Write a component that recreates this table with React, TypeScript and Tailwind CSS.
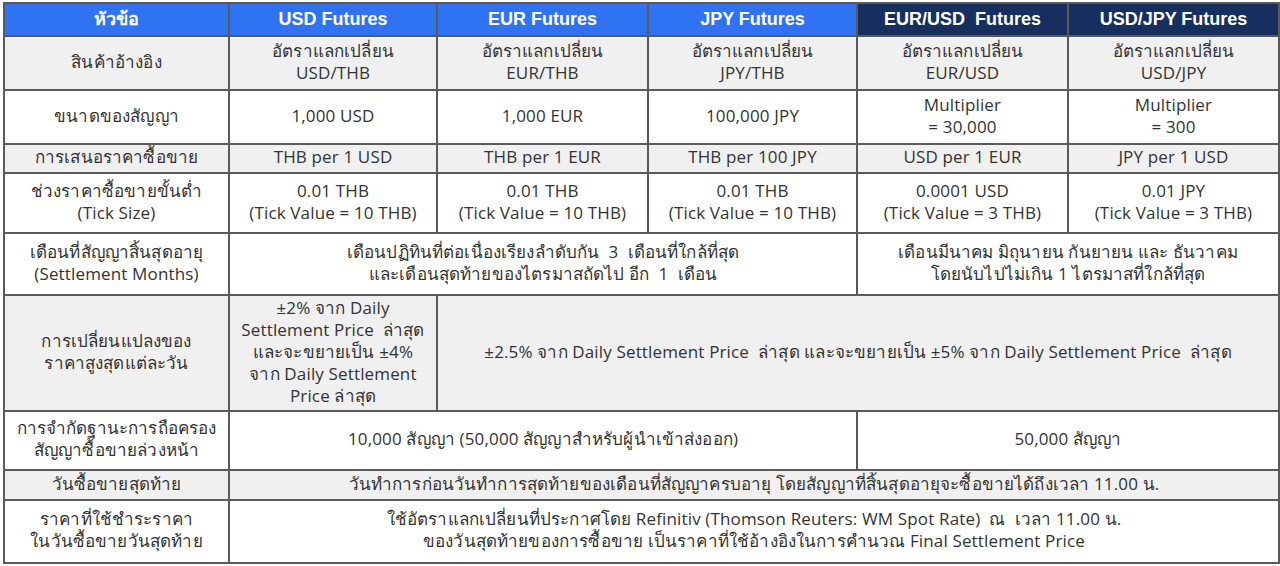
const cell = "border-2 border-[#5a5a5a] text-center align-middle px-0 leading-[22px]";

type Row = { label: string[]; cells: { text: string[]; span?: number }[]; bg: string; h: string };

const rows: Row[] = [
	{
		label: ["สินค้าอ้างอิง"],
		cells: [
			{ text: ["อัตราแลกเปลี่ยน", "USD/THB"] },
			{ text: ["อัตราแลกเปลี่ยน", "EUR/THB"] },
			{ text: ["อัตราแลกเปลี่ยน", "JPY/THB"] },
			{ text: ["อัตราแลกเปลี่ยน", "EUR/USD"] },
			{ text: ["อัตราแลกเปลี่ยน", "USD/JPY"] },
		],
		bg: "bg-[#f0f0f0]",
		h: "h-[54px]",
	},
	{
		label: ["ขนาดของสัญญา"],
		cells: [
			{ text: ["1,000 USD"] },
			{ text: ["1,000 EUR"] },
			{ text: ["100,000 JPY"] },
			{ text: ["Multiplier", "= 30,000"] },
			{ text: ["Multiplier", "= 300"] },
		],
		bg: "bg-white",
		h: "h-[54px]",
	},
	{
		label: ["การเสนอราคาซื้อขาย"],
		cells: [
			{ text: ["THB per 1 USD"] },
			{ text: ["THB per 1 EUR"] },
			{ text: ["THB per 100 JPY"] },
			{ text: ["USD per 1 EUR"] },
			{ text: ["JPY per 1 USD"] },
		],
		bg: "bg-[#f0f0f0]",
		h: "h-[29px]",
	},
	{
		label: ["ช่วงราคาซื้อขายขั้นต่ำ", "(Tick Size)"],
		cells: [
			{ text: ["0.01 THB", "(Tick Value = 10 THB)"] },
			{ text: ["0.01 THB", "(Tick Value = 10 THB)"] },
			{ text: ["0.01 THB", "(Tick Value = 10 THB)"] },
			{ text: ["0.0001 USD", "(Tick Value = 3 THB)"] },
			{ text: ["0.01 JPY", "(Tick Value = 3 THB)"] },
		],
		bg: "bg-white",
		h: "h-[60px]",
	},
	{
		label: ["เดือนที่สัญญาสิ้นสุดอายุ", "(Settlement Months)"],
		cells: [
			{
				text: [
					"เดือนปฏิทินที่ต่อเนื่องเรียงลำดับกัน  3  เดือนที่ใกล้ที่สุด",
					"และเดือนสุดท้ายของไตรมาสถัดไป อีก  1  เดือน",
				],
				span: 3,
			},
			{ text: ["เดือนมีนาคม มิถุนายน กันยายน และ ธันวาคม", "โดยนับไปไม่เกิน 1 ไตรมาสที่ใกล้ที่สุด"], span: 2 },
		],
		bg: "bg-white",
		h: "h-[62px]",
	},
	{
		label: ["การเปลี่ยนแปลงของ", "ราคาสูงสุดแต่ละวัน"],
		cells: [
			{
				text: ["±2% จาก Daily", "Settlement Price  ล่าสุด", "และจะขยายเป็น ±4%", "จาก Daily Settlement", "Price ล่าสุด"],
			},
			{
				text: ["±2.5% จาก Daily Settlement Price  ล่าสุด และจะขยายเป็น ±5% จาก Daily Settlement Price  ล่าสุด"],
				span: 4,
			},
		],
		bg: "bg-[#f0f0f0]",
		h: "h-[116px]",
	},
	{
		label: ["การจำกัดฐานะการถือครอง", "สัญญาซื้อขายล่วงหน้า"],
		cells: [
			{ text: ["10,000 สัญญา (50,000 สัญญาสำหรับผู้นำเข้าส่งออก)"], span: 3 },
			{ text: ["50,000 สัญญา"], span: 2 },
		],
		bg: "bg-white",
		h: "h-[59px]",
	},
	{
		label: ["วันซื้อขายสุดท้าย"],
		cells: [
			{
				text: ["วันทำการก่อนวันทำการสุดท้ายของเดือนที่สัญญาครบอายุ โดยสัญญาที่สิ้นสุดอายุจะซื้อขายได้ถึงเวลา 11.00 น."],
				span: 5,
			},
		],
		bg: "bg-[#f0f0f0]",
		h: "h-[30px]",
	},
	{
		label: ["ราคาที่ใช้ชำระราคา", "ในวันซื้อขายวันสุดท้าย"],
		cells: [
			{
				text: [
					"ใช้อัตราแลกเปลี่ยนที่ประกาศโดย Refinitiv (Thomson Reuters: WM Spot Rate)  ณ  เวลา 11.00 น.",
					"ของวันสุดท้ายของการซื้อขาย เป็นราคาที่ใช้อ้างอิงในการคำนวณ Final Settlement Price",
				],
				span: 5,
			},
		],
		bg: "bg-white",
		h: "h-[63px]",
	},
];

const headers = [
	{ text: "หัวข้อ", bg: "bg-[#2f72f2]" },
	{ text: "USD Futures", bg: "bg-[#2f72f2]" },
	{ text: "EUR Futures", bg: "bg-[#2f72f2]" },
	{ text: "JPY Futures", bg: "bg-[#2f72f2]" },
	{ text: "EUR/USD  Futures", bg: "bg-[#162f5e]" },
	{ text: "USD/JPY Futures", bg: "bg-[#162f5e]" },
];

function Lines({ text }: { text: string[] }) {
	return (
		<>
			{text.map((t) => (
				<div key={t} className="whitespace-pre">
					{t}
				</div>
			))}
		</>
	);
}

export default function App() {
	return (
		<div className="w-[1280px] h-[566px] bg-white pt-[2px] pl-[3px] font-['Open_Sans','Liberation_Sans',sans-serif] text-[17px] text-[#333333] tracking-[0.15px]">
			<table className="table-fixed border-collapse w-[1275px]">
				<colgroup>
					<col className="w-[225px]" />
					<col className="w-[208px]" />
					<col className="w-[211px]" />
					<col className="w-[209px]" />
					<col className="w-[211px]" />
					<col className="w-[211px]" />
				</colgroup>
				<thead>
					<tr className="h-[33px]">
						{headers.map((h) => (
							<th
								key={h.text}
								className={`${cell} ${h.bg} pb-[2px] text-white font-bold text-[18px] tracking-normal whitespace-pre font-['Liberation_Sans',sans-serif]`}
							>
								{h.text}
							</th>
						))}
					</tr>
				</thead>
				<tbody>
					{rows.map((r) => (
						<tr key={r.label[0]} className={`${r.h} ${r.bg}`}>
							<td className={`${cell} pb-[3px]`}>
								<Lines text={r.label} />
							</td>
							{r.cells.map((c) => (
								<td key={c.text[0]} colSpan={c.span} className={`${cell} pb-[3px]`}>
									<Lines text={c.text} />
								</td>
							))}
						</tr>
					))}
				</tbody>
			</table>
		</div>
	);
}
